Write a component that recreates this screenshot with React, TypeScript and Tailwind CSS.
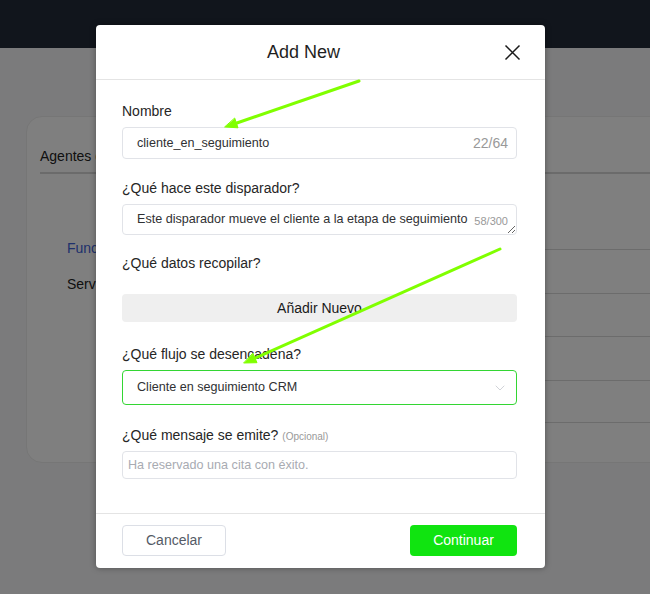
import { ChevronDown } from 'lucide-react';

const tableRows = ['h-[44px]', 'h-[44px]', 'h-[43px]', 'h-[44px]', 'h-[42px]'];

function BackgroundPage() {
  return (
    <div className="flex h-full flex-col">
      {/* Top bar */}
      <header className="h-12 shrink-0 bg-[#232b39]" />

      {/* Content card, runs off the right edge */}
      <div className="pl-[26px] pt-[68px]">
        <div className="h-[347px] w-[700px] rounded-2xl border border-[#ececec] bg-white pl-[13px] pt-[29px]">
          <div className="text-[14px] leading-[20px] text-[#222]">Agentes de IA</div>
          <div className="mt-[6px] h-[2px] bg-[#d6d6d6]" />

          <div className="grid grid-cols-[180px_1fr]">
            <div className="pl-[27px] pt-[64px] text-[14px] leading-[20px]">
              <div className="text-[#3f63d8]">Funciones</div>
              <div className="mt-[16px] text-[#222]">Servicios</div>
            </div>
            <div className="pt-[32px]">
              {tableRows.map((h, i) => (
                <div key={i} className={`${h} border-b border-[#d9d9d9]`} />
              ))}
            </div>
          </div>
        </div>
      </div>
    </div>
  );
}

function Label({ children }: { children: React.ReactNode }) {
  return <div className="text-[14px] leading-[20px] text-[#262626]">{children}</div>;
}

function AddNewModal() {
  return (
    <div className="absolute left-[96px] top-[25px] w-[449px] rounded-[4px] bg-white shadow-[0_0_6px_rgba(0,0,0,0.35)]">
      {/* Header */}
      <div className="grid h-[55px] grid-cols-[1fr_auto] items-center border-b border-[#e4e4e4]">
        <h2 className="pl-[7px] text-center text-[18px] leading-[24px] text-[#1f1f1f]">Add New</h2>
        <div className="flex justify-end pr-[24px]">
          <svg width="17" height="17" viewBox="0 0 17 17" fill="none" stroke="#1a1a1a" strokeWidth="1.5">
            <path d="M1.5 1.5 L15.5 15.5 M15.5 1.5 L1.5 15.5" />
          </svg>
        </div>
      </div>

      {/* Body */}
      <div className="pb-[34px] pl-[26px] pr-[28px] pt-[21px]">
        <Label>Nombre</Label>
        <div className="mt-[6px] flex h-[32px] items-center justify-between rounded-[4px] border border-[#e1e3e8] pl-[14px] pr-[8px]">
          <span className="text-[12.6px] text-[#303133]">cliente_en_seguimiento</span>
          <span className="text-[14px] text-[#999]">22/64</span>
        </div>

        <div className="mt-[19px]">
          <Label>¿Qué hace este disparador?</Label>
        </div>
        <div className="relative mt-[6px]">
          <textarea
            readOnly
            value="Este disparador mueve el cliente a la etapa de seguimiento"
            className="block h-[31px] w-full resize-y rounded-[4px] border border-[#e1e3e8] px-[14px] py-[5px] font-[family-name:'Liberation_Sans',Arial,sans-serif] text-[12.6px] leading-[19px] text-[#303133] outline-none"
          />
          <span className="absolute bottom-[6px] right-[9px] text-[11px] font-medium text-[#999]">58/300</span>
        </div>

        <div className="mt-[18px]">
          <Label>¿Qué datos recopilar?</Label>
        </div>
        <button
          type="button"
          className="mt-[21px] flex h-[28px] w-full items-center justify-center rounded-[4px] bg-[#efefef] text-[14px] text-[#1a1a1a]"
        >
          Añadir Nuevo
        </button>

        <div className="mt-[22px]">
          <Label>¿Qué flujo se desencadena?</Label>
        </div>
        <div className="mt-[6px] flex h-[35px] items-center justify-between rounded-[4px] border border-[#33d633] pl-[14px] pr-[8px]">
          <span className="text-[12.6px] text-[#303133]">Cliente en seguimiento CRM</span>
          <ChevronDown className="h-[16px] w-[16px] text-[#c8cad0]" strokeWidth={1.25} />
        </div>

        <div className="mt-[20px]">
          <Label>
            ¿Qué mensaje se emite? <span className="text-[10px] leading-none text-[#999]">(Opcional)</span>
          </Label>
        </div>
        <div className="mt-[6px] flex h-[28px] items-center rounded-[4px] border border-[#e1e3e8] px-[5px]">
          <span className="text-[12.6px] text-[#a8abb2]">Ha reservado una cita con éxito.</span>
        </div>
      </div>

      {/* Footer */}
      <div className="flex items-center justify-between border-t border-[#e4e4e4] pb-[12px] pl-[26px] pr-[28px] pt-[11px]">
        <button
          type="button"
          className="h-[31px] w-[104px] rounded-[4px] border border-[#dcdfe6] bg-white text-[14px] text-[#555b66]"
        >
          Cancelar
        </button>
        <button
          type="button"
          className="h-[31px] w-[107px] rounded-[4px] bg-[#10e410] text-[14px] text-white"
        >
          Continuar
        </button>
      </div>
    </div>
  );
}

function Arrows() {
  return (
    <svg className="pointer-events-none absolute inset-0" width="650" height="594" viewBox="0 0 650 594">
      <g stroke="#80ff00" strokeWidth="3" strokeLinecap="round" fill="#80ff00">
        <line x1="359" y1="81" x2="234" y2="124" />
        <polygon points="225,127 238,127.8 234.8,118.4" strokeWidth="1" strokeLinejoin="round" />
        <line x1="500" y1="249" x2="253" y2="359" />
        <polygon points="244,363 257,362.7 253,353.5" strokeWidth="1" strokeLinejoin="round" />
      </g>
    </svg>
  );
}

export default function App() {
  return (
    <div className="relative h-[594px] w-[650px] overflow-hidden bg-[#f6f7f9] font-[family-name:'Liberation_Sans',Arial,sans-serif]">
      <BackgroundPage />
      <div className="absolute inset-0 bg-black/50" />
      <AddNewModal />
      <Arrows />
    </div>
  );
}
